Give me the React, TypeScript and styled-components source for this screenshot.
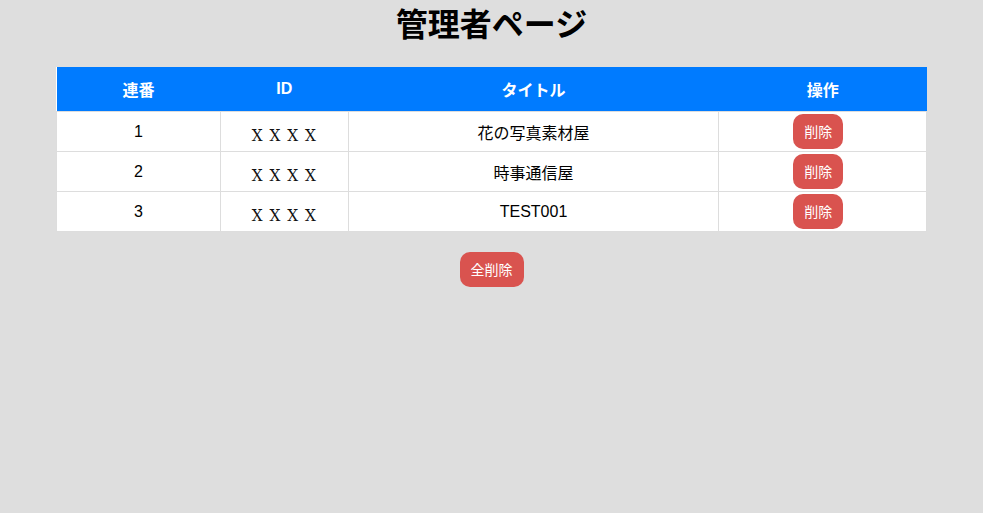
import React from "react";
import styled, { createGlobalStyle } from "styled-components";

const GlobalStyle = createGlobalStyle`
  html, body {
    margin: 0;
    padding: 0;
    background: #dedede;
  }
  body {
    font-family: "Liberation Sans", Arial, "Noto Sans CJK JP", sans-serif;
    color: #000;
  }
`;

const Page = styled.div`
  padding: 0 56px;
  display: flex;
  flex-direction: column;
  align-items: stretch;
`;

const Title = styled.h1`
  margin: 0 0 23px;
  font-family: "Noto Sans CJK JP", sans-serif;
  font-size: 32px;
  font-weight: 700;
  line-height: 44px;
  height: 44px;
  text-align: center;
`;

const Table = styled.table`
  width: 100%;
  border-collapse: collapse;
  table-layout: fixed;
  background: #fff;
`;

const HeadCell = styled.th<{ $w: string }>`
  width: ${(p) => p.$w};
  height: 44px;
  padding: 0;
  background: #007bff;
  color: #fff;
  font-size: 16px;
  font-weight: 700;
  font-family: "Liberation Sans", Arial, "Noto Sans CJK JP", sans-serif;
  text-align: center;
  vertical-align: middle;
  border: none;
`;

const Row = styled.tr`
  height: 40px;
`;

const Cell = styled.td<{ $shift?: boolean }>`
  border: 1px solid #dddddd;
  padding: ${(p) => (p.$shift ? "6px 0 0" : "0")};
  height: 39px;
  box-sizing: border-box;
  font-size: 16px;
  text-align: center;
  vertical-align: middle;
  color: #000;
`;

const IdText = styled.span`
  font-family: "DejaVu Serif", "Liberation Serif", serif;
  font-stretch: condensed;
  font-size: 17px;
  letter-spacing: 1px;
  color: #111;
`;

const DangerButton = styled.button<{ $inRow?: boolean }>`
  display: inline-block;
  background: #d9534f;
  color: #fff;
  border: none;
  border-radius: 10px;
  padding: 8px 11px;
  margin: 0 ${(p) => (p.$inRow ? "9px" : "0")} 0 0;
  font-family: "Noto Sans CJK JP", sans-serif;
  font-size: 14px;
  line-height: 19px;
  cursor: pointer;
`;

const Footer = styled.div`
  margin-top: 20px;
  display: flex;
  justify-content: center;
`;

const rows = [
  { no: 1, id: "X X X X", title: "花の写真素材屋" },
  { no: 2, id: "X X X X", title: "時事通信屋" },
  { no: 3, id: "X X X X", title: "TEST001" },
];

export default function App() {
  return (
    <>
      <GlobalStyle />
      <Page>
        <Title>管理者ページ</Title>
        <Table>
          <thead>
            <tr>
              <HeadCell $w="18.83%">連番</HeadCell>
              <HeadCell $w="14.7%">ID</HeadCell>
              <HeadCell $w="42.6%">タイトル</HeadCell>
              <HeadCell $w="23.87%">操作</HeadCell>
            </tr>
          </thead>
          <tbody>
            {rows.map((r) => (
              <Row key={r.no}>
                <Cell>{r.no}</Cell>
                <Cell $shift>
                  <IdText>{r.id}</IdText>
                </Cell>
                <Cell>{r.title}</Cell>
                <Cell>
                  <DangerButton $inRow>削除</DangerButton>
                </Cell>
              </Row>
            ))}
          </tbody>
        </Table>
        <Footer>
          <DangerButton>全削除</DangerButton>
        </Footer>
      </Page>
    </>
  );
}
